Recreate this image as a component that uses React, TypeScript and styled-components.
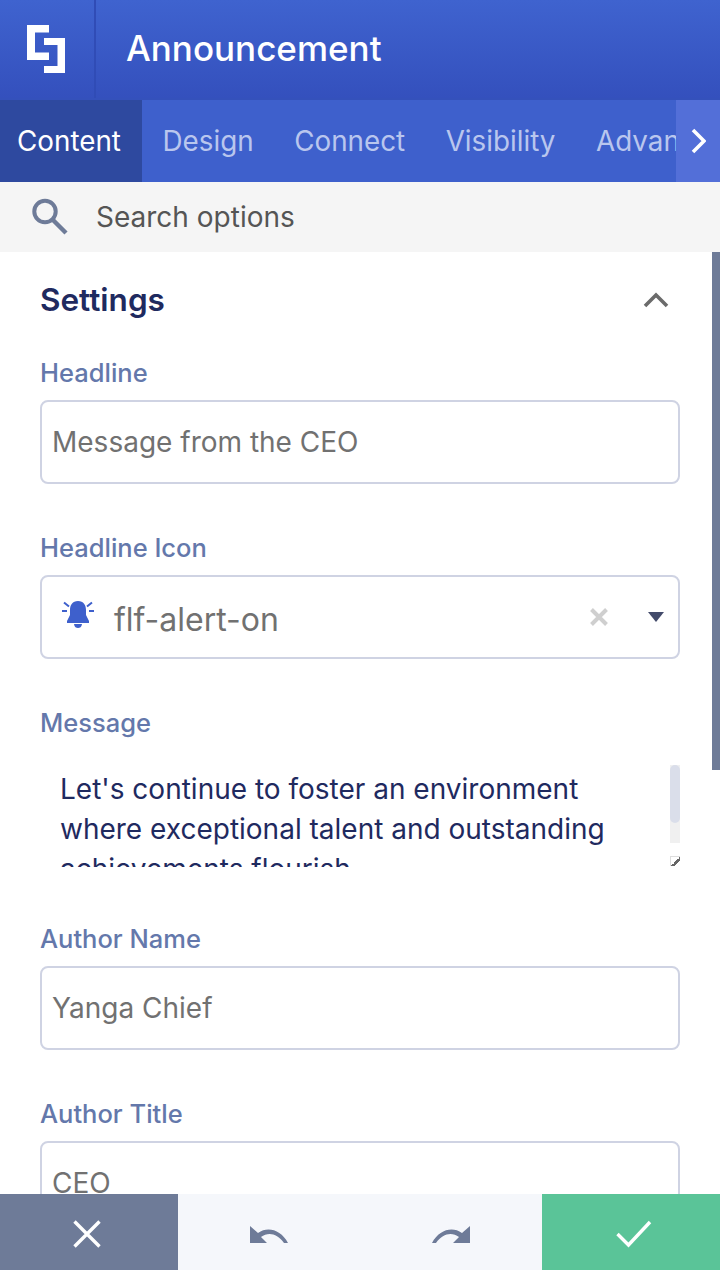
import React from "react";
import styled, { createGlobalStyle } from "styled-components";

const Global = createGlobalStyle`
  html, body { margin: 0; padding: 0; background: #fff; }
  * { box-sizing: border-box; }
`;

const Shell = styled.div`
  width: 720px;
  height: 1270px;
  display: flex;
  flex-direction: column;
  overflow: hidden;
  font-family: Inter, "Liberation Sans", sans-serif;
  background: #fff;
`;

const Header = styled.header`
  height: 100px;
  flex: none;
  display: flex;
  background: linear-gradient(180deg, #3f63cf 0%, #3450bd 100%);
  border-bottom: 2px solid #3451bb;
`;

const LogoCell = styled.div`
  width: 96px;
  flex: none;
  display: flex;
  align-items: center;
  justify-content: center;
  border-right: 2px solid #304cb6;
  padding: 0 2px 0 0;
`;

const Title = styled.h1`
  margin: 0;
  padding: 0 0 2px 30px;
  align-self: center;
  font-size: 35px;
  font-weight: 500;
  color: #fff;
`;

const TabBar = styled.nav`
  position: relative;
  height: 82px;
  flex: none;
  display: flex;
  overflow: hidden;
  background: #3e60cc;
`;

const Tab = styled.div<{ $active?: boolean }>`
  height: 100%;
  flex: none;
  width: ${(p) => (p.$active ? "142px" : "auto")};
  padding: ${(p) => (p.$active ? "0 0 0 17px" : "0 20px 0 20.5px")};
  display: flex;
  align-items: center;
  font-size: 27.8px;
  font-weight: 400;
  color: ${(p) => (p.$active ? "#fff" : "#b9c6ee")};
  background: ${(p) => (p.$active ? "#2e499f" : "transparent")};
`;

const TabArrow = styled.div`
  position: absolute;
  top: 0;
  right: 0;
  width: 44px;
  height: 100%;
  display: flex;
  align-items: center;
  justify-content: center;
  background: #536fd8;
`;

const SearchBar = styled.div`
  height: 70px;
  flex: none;
  display: flex;
  align-items: center;
  gap: 27px;
  padding-left: 31px;
  background: #f5f5f5;
  font-size: 28px;
  color: #555;
`;

const Body = styled.main`
  position: relative;
  flex: 1;
  min-height: 0;
  overflow: hidden;
  padding: 0 40px;
`;

const PageThumb = styled.div`
  position: absolute;
  top: 0;
  right: 0;
  width: 8px;
  height: 518px;
  background: #6e7b98;
`;

const SectionHead = styled.div`
  height: 100px;
  display: flex;
  align-items: center;
  justify-content: space-between;
  padding: 0 11px 4px 0;
`;

const SectionTitle = styled.h2`
  margin: 0 0 2px;
  font-size: 31.5px;
  font-weight: 600;
  color: #1f2a5f;
`;

const Label = styled.div`
  height: 40px;
  display: flex;
  align-items: center;
  font-size: 25.5px;
  font-weight: 500;
  color: #6478ab;
`;

const Field = styled.div`
  margin-bottom: 43px;
`;

const InputBox = styled.div`
  height: 84px;
  margin-top: 8px;
  padding: 0 10px;
  display: flex;
  align-items: center;
  border: 2px solid #cfd3e3;
  border-radius: 8px;
  font-size: 28px;
  color: #717171;
`;

const SelectBox = styled(InputBox)`
  padding: 0 14px 0 20px;
  font-size: 32px;
`;

const BellIcon = styled.svg`
  margin-bottom: 6px;
`;

const SelectText = styled.span`
  flex: 1;
  margin-left: 20px;
  padding-top: 4px;
`;

const ClearWrap = styled.span`
  display: flex;
  margin-right: 39px;
`;

const MessageBox = styled.div`
  position: relative;
  height: 103px;
  margin: 22px 0 51px;
  padding: 5px 40px 0 20px;
  overflow: hidden;
  font-size: 28px;
  line-height: 40px;
  color: #1f2a5f;
`;

const TrackBar = styled.div`
  position: absolute;
  top: 1px;
  right: 0;
  width: 10px;
  height: 78px;
  background: #f0f0f0;
`;

const TrackThumb = styled.div`
  width: 10px;
  height: 58px;
  border-radius: 5px;
  background: #dadeea;
`;

const Grip = styled.div`
  position: absolute;
  top: 92px;
  right: 0;
  width: 10px;
  height: 10px;
  border: 1px solid #ddd;
  border-right: 0;
  border-bottom: 0;
  background: linear-gradient(135deg, transparent 50%, #666 50%, #666 70%, transparent 70%);
`;

const Footer = styled.footer`
  height: 76px;
  flex: none;
  display: grid;
  grid-template-columns: 178px 1fr 1fr 178px;
  background: #f5f7fb;
`;

const FootBtn = styled.div<{ $bg?: string; $nudge?: number }>`
  display: flex;
  align-items: center;
  justify-content: center;
  padding-top: 4px;
  padding-left: ${(p) => (p.$nudge && p.$nudge > 0 ? p.$nudge : 0)}px;
  padding-right: ${(p) => (p.$nudge && p.$nudge < 0 ? -p.$nudge : 0)}px;
  background: ${(p) => p.$bg ?? "transparent"};
`;

const App = () => (
  <Shell>
    <Global />
    <Header>
      <LogoCell>
        <svg width="38" height="48" viewBox="0 0 38 48">
          <path d="M0 0h22v7.500H8v20h14V35H0z" fill="#fff" />
          <path d="M17 13h21v35H17v-7h13.500V20H17z" fill="#fff" />
        </svg>
      </LogoCell>
      <Title>Announcement</Title>
    </Header>
    <TabBar>
      <Tab $active>Content</Tab>
      <Tab>Design</Tab>
      <Tab>Connect</Tab>
      <Tab>Visibility</Tab>
      <Tab>Advanced</Tab>
      <TabArrow>
        <svg width="16" height="26" viewBox="0 0 16 26">
          <path d="M3 2l11 11L3 24" fill="none" stroke="#fff" strokeWidth="3.6" />
        </svg>
      </TabArrow>
    </TabBar>
    <SearchBar>
      <svg width="38" height="38" viewBox="0 0 38 38">
        <circle cx="14" cy="13.500" r="10.700" fill="none" stroke="#6e7b98" strokeWidth="4" />
        <path d="M22 22l13 13" stroke="#6e7b98" strokeWidth="4.400" />
      </svg>
      Search options
    </SearchBar>
    <Body>
      <PageThumb />
      <SectionHead>
        <SectionTitle>Settings</SectionTitle>
        <svg width="26" height="16" viewBox="0 0 26 16">
          <path d="M2 14L13 3l11 11" fill="none" stroke="#6b6b6b" strokeWidth="3.6" />
        </svg>
      </SectionHead>
      <Field>
        <Label>Headline</Label>
        <InputBox>Message from the CEO</InputBox>
      </Field>
      <Field>
        <Label>Headline Icon</Label>
        <SelectBox>
          <BellIcon width="32" height="28" viewBox="0 0 32 28">
            <path d="M16 1c5.500 0 8 4 8 9v5l3 6v2H5v-2l3-6v-5c0-5 2.500-9 8-9z" fill="#3e60cc" />
            <path d="M12 24h8c-.5 3-2 4-4 4s-3.500-1-4-4z" fill="#3e60cc" />
            <path d="M0 11h5M27 11h5M2 2.500l5 4M30 2.500l-5 4" stroke="#3e60cc" strokeWidth="2" />
          </BellIcon>
          <SelectText>flf-alert-on</SelectText>
          <ClearWrap>
            <svg width="20" height="20" viewBox="0 0 20 20">
              <path d="M2.500 2.500l15 15M17.500 2.500l-15 15" stroke="#cfcfcf" strokeWidth="4" />
            </svg>
          </ClearWrap>
          <svg width="16" height="10" viewBox="0 0 16 10">
            <path d="M0 0h16L8 10z" fill="#434b6b" />
          </svg>
        </SelectBox>
      </Field>
      <div>
        <Label>Message</Label>
        <MessageBox>
          Let's continue to foster an environment where exceptional talent and outstanding achievements flourish.
          <TrackBar>
            <TrackThumb />
          </TrackBar>
          <Grip />
        </MessageBox>
      </div>
      <Field>
        <Label>Author Name</Label>
        <InputBox>Yanga Chief</InputBox>
      </Field>
      <Field>
        <Label>Author Title</Label>
        <InputBox>CEO</InputBox>
      </Field>
    </Body>
    <Footer>
      <FootBtn $bg="#6e7b98" $nudge={-4}>
        <svg width="30" height="30" viewBox="0 0 30 30">
          <path d="M2.500 2.500l25 25M27.500 2.500l-25 25" stroke="#fff" strokeWidth="3.400" />
        </svg>
      </FootBtn>
      <FootBtn>
        <svg width="40" height="18" viewBox="0 0 40 18">
          <path d="M1 1v17h17l-6-6c7-5 16-4 23 6h4C32 5 19 1 9 8z" fill="#6e7b98" />
        </svg>
      </FootBtn>
      <FootBtn>
        <svg width="40" height="18" viewBox="0 0 40 18">
          <path d="M39 1v17H22l6-6c-7-5-16-4-23 6H1C8 5 21 1 31 8z" fill="#6e7b98" />
        </svg>
      </FootBtn>
      <FootBtn $bg="#5ac498" $nudge={5}>
        <svg width="36" height="28" viewBox="0 0 36 28">
          <path d="M1.500 14l11 11L34 2" fill="none" stroke="#fff" strokeWidth="3.400" />
        </svg>
      </FootBtn>
    </Footer>
  </Shell>
);

export default App;
